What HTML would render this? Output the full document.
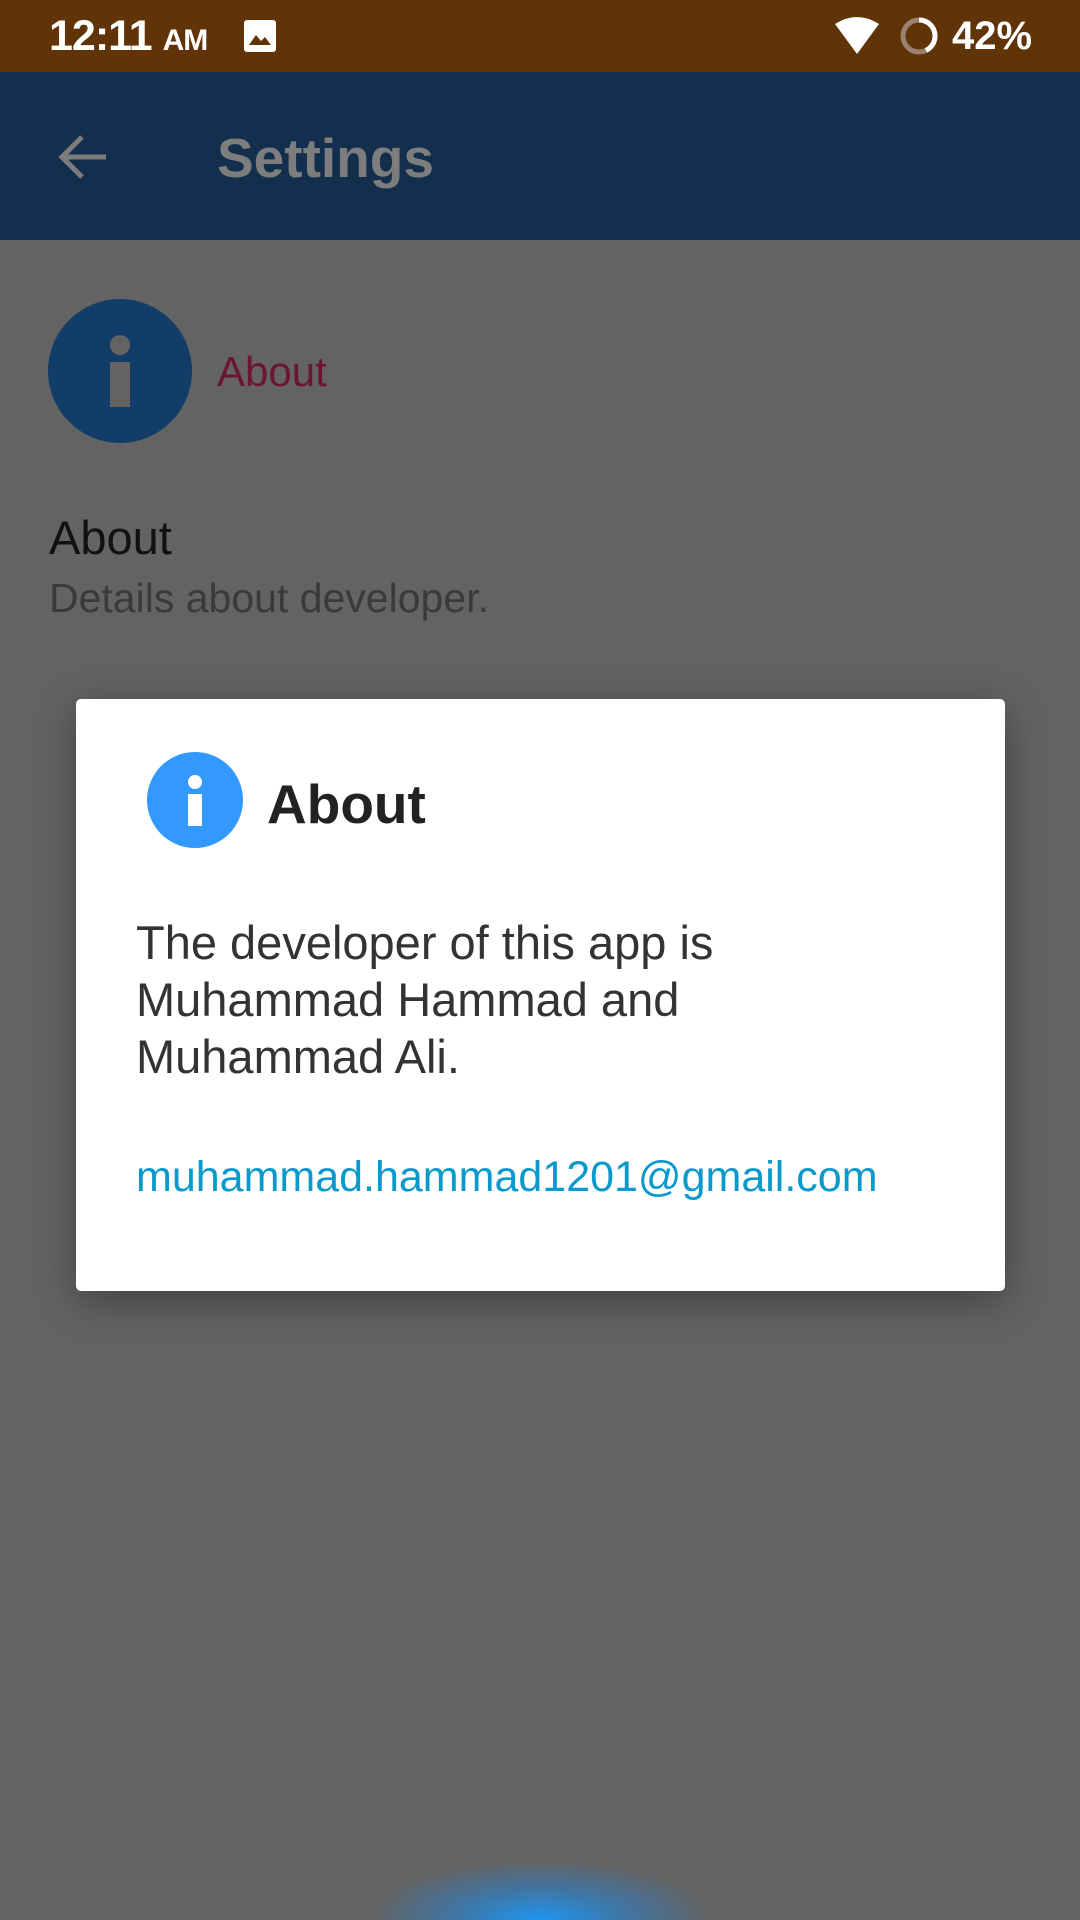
<!DOCTYPE html>
<html><head><meta charset="utf-8"><style>
*{margin:0;padding:0;box-sizing:border-box}
html{width:1080px;height:1920px;overflow:hidden}
body{width:1080px;height:1920px;position:relative;overflow:hidden;background:#636363;font-family:"Liberation Sans",sans-serif}
.abs{position:absolute}
</style></head><body>
<div class="abs" style="left:0;top:0;width:1080px;height:72px;background:#613407"></div>
<div class="abs" style="left:49px;top:12px;color:#fff;font-size:43px;font-weight:bold;letter-spacing:-1px">12:11 <span style="font-size:30px">AM</span></div>
<svg class="abs" style="left:242px;top:18px" width="36" height="36" viewBox="0 0 36 36"><rect x="2" y="2" width="32" height="32" rx="3" fill="#fff"/><path d="M7 27 L14 17 L19 23 L23 19 L29 27Z" fill="#613407"/></svg>
<svg class="abs" style="left:834px;top:16px" width="46" height="40" viewBox="0 0 46 40"><path d="M1 8 Q23 -6 45 8 L23 38Z" fill="#fff"/></svg>
<svg class="abs" style="left:898px;top:15px" width="42" height="42" viewBox="0 0 42 42"><circle cx="21" cy="21" r="16" fill="none" stroke="#9b8270" stroke-width="5"/><path d="M21 5 A16 16 0 0 1 28 35.4" fill="none" stroke="#fff" stroke-width="5"/></svg>
<div class="abs" style="left:952px;top:14px;color:#fff;font-size:40px;font-weight:bold">42%</div>

<div class="abs" style="left:0;top:72px;width:1080px;height:168px;background:#142e4e"></div>
<svg class="abs" style="left:56px;top:133px" width="54" height="48" viewBox="0 0 54 48"><path d="M50 24 H6 M26 4 L6 24 L26 44" fill="none" stroke="#7c7c7c" stroke-width="5"/></svg>
<div class="abs" style="left:217px;top:126px;color:#7d7d7d;font-size:55px;font-weight:bold">Settings</div>

<div class="abs" style="left:48px;top:299px;width:144px;height:144px;border-radius:50%;background:#123d68"></div>
<div class="abs" style="left:110px;top:335px;width:20px;height:20px;border-radius:50%;background:#636363"></div>
<div class="abs" style="left:110px;top:362px;width:20px;height:45px;background:#636363"></div>
<div class="abs" style="left:217px;top:348px;color:#6b1435;font-size:42px">About</div>
<div class="abs" style="left:49px;top:510px;color:#111;font-size:47px">About</div>
<div class="abs" style="left:49px;top:575px;color:#3a3a3a;font-size:41px">Details about developer.</div>

<div class="abs" style="left:76px;top:699px;width:929px;height:592px;background:#fff;border-radius:5px;box-shadow:0 10px 40px rgba(0,0,0,0.35)"></div>
<div class="abs" style="left:147px;top:752px;width:96px;height:96px;border-radius:50%;background:#3399ff"></div>
<div class="abs" style="left:188px;top:775px;width:14px;height:14px;border-radius:50%;background:#fff"></div>
<div class="abs" style="left:188px;top:794px;width:14px;height:32px;background:#fff"></div>
<div class="abs" style="left:267px;top:772px;color:#222;font-size:55px;font-weight:bold">About</div>
<div class="abs" style="left:136px;top:914px;color:#333;font-size:47px;line-height:57px">The developer of this app is<br>Muhammad Hammad and<br>Muhammad Ali.</div>
<div class="abs" style="left:136px;top:1153px;color:#0a99cc;font-size:43px">muhammad.hammad1201@gmail.com</div>

<div class="abs" style="left:370px;top:1860px;width:340px;height:60px;background:radial-gradient(ellipse 170px 60px at 50% 100%,rgba(30,150,240,1) 0%,rgba(40,130,210,0.6) 50%,rgba(99,99,99,0) 100%)"></div>
</body></html>
